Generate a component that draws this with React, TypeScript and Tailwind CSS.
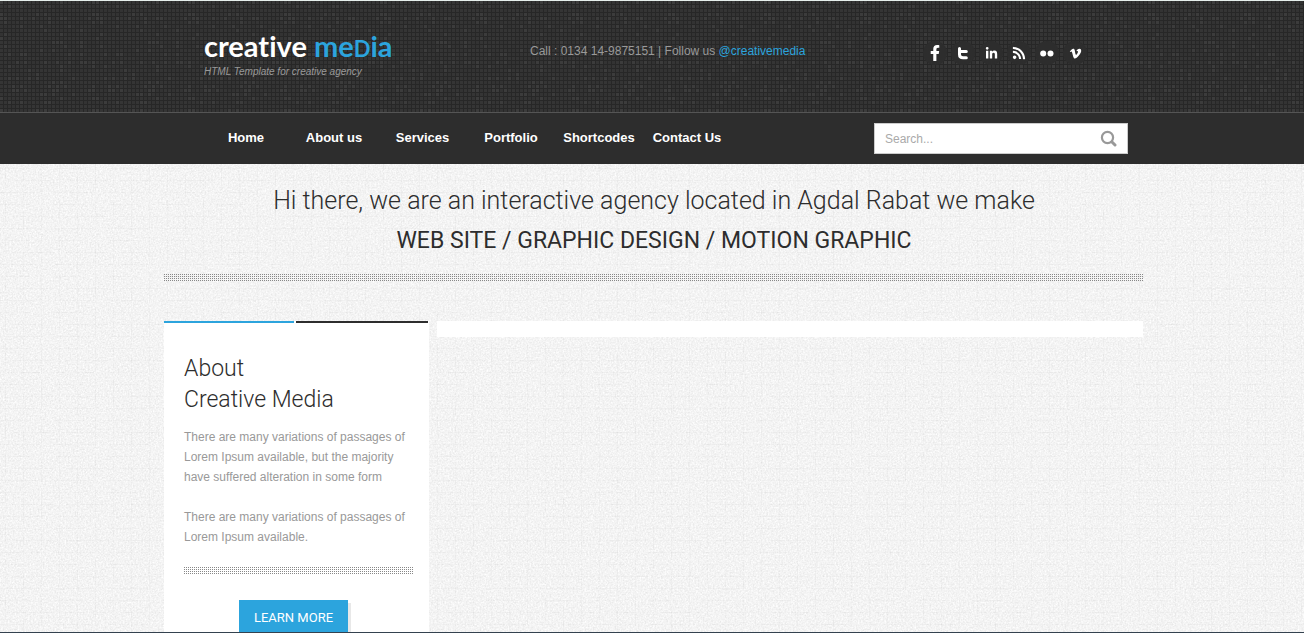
import React from 'react';
import { FaFacebookF, FaLinkedinIn, FaRss, FaVimeoV } from 'react-icons/fa';

const navItems = [
  { label: 'Home', width: 'w-[88px]' },
  { label: 'About us', width: 'w-[88px]' },
  { label: 'Services', width: 'w-[89px]' },
  { label: 'Portfolio', width: 'w-[88px]' },
  { label: 'Shortcodes', width: 'w-[88px]' },
  { label: 'Contact Us', width: 'w-[88px]' },
];

// Small deterministic hash so the header tiles keep the same shade on each render
const shade = (n: number) => {
  const v = Math.abs(Math.sin(n * 12.9898) * 43758.5453) % 1;
  return v > 0.85 ? '#3c3c3c' : v > 0.35 ? '#353535' : '#333333';
};

function HeaderTexture() {
  return (
    <svg aria-hidden="true" className="absolute inset-0 h-full w-full">
      <defs>
        <pattern id="tiles" width="96" height="96" patternUnits="userSpaceOnUse">
          <rect width="96" height="96" fill="#272727" />
          {Array.from({ length: 576 }, (_, i) => (
            <rect key={i} x={(i % 24) * 4} y={Math.floor(i / 24) * 4} width="3" height="3" fill={shade(i + 1)} />
          ))}
        </pattern>
      </defs>
      <rect width="100%" height="100%" fill="url(#tiles)" />
    </svg>
  );
}

function PaperTexture() {
  return (
    <svg aria-hidden="true" className="absolute inset-0 h-full w-full">
      <filter id="paper" x="0" y="0" width="100%" height="100%" colorInterpolationFilters="sRGB">
        <feTurbulence type="fractalNoise" baseFrequency="0.6" numOctaves="3" seed="4" />
        <feColorMatrix values="0.13 0 0 0 0.89  0.13 0 0 0 0.89  0.13 0 0 0 0.89  0 0 0 0 1" />
      </filter>
      <pattern id="weave" width="54" height="36" patternUnits="userSpaceOnUse">
        <path
          d="M0 4.5H30M12 16.5H54M0 28.5H40M5.5 0V24M23.5 10V36M41.5 0V30"
          stroke="#000"
          strokeOpacity="0.02"
        />
      </pattern>
      <rect width="100%" height="100%" filter="url(#paper)" />
      <rect width="100%" height="100%" fill="url(#weave)" />
    </svg>
  );
}

function DottedRule() {
  return (
    <div className="h-[7px] bg-[conic-gradient(from_270deg_at_1px_1px,#888_90deg,transparent_0)] bg-[length:2px_2px]" />
  );
}

function TwitterIcon() {
  return (
    <svg width="12" height="14" viewBox="0 0 12 14" fill="none" stroke="currentColor" strokeWidth="3" strokeLinecap="round">
      <path d="M2.5 2.5V8.5Q2.5 11.8 6 11.8H9.3M3 5.5H9.3" />
    </svg>
  );
}

function FlickrIcon() {
  return (
    <svg width="14" height="14" viewBox="0 0 14 14" fill="currentColor">
      <circle cx="3.2" cy="7.5" r="3" />
      <circle cx="10.5" cy="7.5" r="3" />
    </svg>
  );
}

function SocialLinks() {
  const links = [
    { label: 'Facebook', icon: <FaFacebookF size={16} /> },
    { label: 'Twitter', icon: <TwitterIcon /> },
    { label: 'LinkedIn', icon: <FaLinkedinIn size={13} /> },
    { label: 'RSS', icon: <FaRss size={14} /> },
    { label: 'Flickr', icon: <FlickrIcon /> },
    { label: 'Vimeo', icon: <FaVimeoV size={13} /> },
  ];
  return (
    <div className="flex gap-1">
      {links.map(({ label, icon }) => (
        <a
          key={label}
          href="#"
          aria-label={label}
          className="flex size-6 items-center justify-center rounded-full bg-[#2d2d2d] text-white"
        >
          {icon}
        </a>
      ))}
    </div>
  );
}

export default function App() {
  return (
    <div className="flex min-h-screen flex-col bg-[#f4f4f4] font-['Liberation_Sans',Arial,sans-serif]">
      <header>
        <div className="relative border-t border-[#e6efec]">
          <HeaderTexture />
          <div className="relative mx-auto flex h-[111px] max-w-[984px] items-start pl-11">
            <div className="w-[326px] pt-[30px]">
              <a
                href="#"
                className="block font-['Lato',sans-serif] text-[29px] leading-[30px] font-bold text-white [font-variant-ligatures:none]"
              >
                creative{' '}
                <span className="text-[#2ca4dd]">
                  me<span className="text-[22px]">D</span>ia
                </span>
              </a>
              <p className="text-[10px] leading-4 text-[#999] italic">HTML Template for creative agency</p>
            </div>
            <p className="w-[393px] pt-10 text-xs leading-5 text-[#999]">
              Call : 0134 14-9875151 | Follow us <a href="#" className="text-[#2ca4dd]">@creativemedia</a>
            </p>
            <div className="pt-10">
              <SocialLinks />
            </div>
          </div>
        </div>
        <div className="border-t border-[#555] bg-[#2d2d2d]">
          <div className="mx-auto flex h-[51px] max-w-[984px] items-center justify-between pr-4 pl-[42px]">
            <nav className="flex pb-0.5">
              {navItems.map(({ label, width }) => (
                <a key={label} href="#" className={`${width} text-center text-[13px] font-bold text-white`}>
                  {label}
                </a>
              ))}
            </nav>
            <form className="flex h-[31px] w-[254px] items-center border border-[#ccc] bg-white pr-2.5 pl-2.5">
              <input
                type="text"
                aria-label="Search"
                placeholder="Search..."
                className="min-w-0 flex-1 text-xs text-[#555] outline-none placeholder:text-[#aaa]"
              />
              <button type="button" aria-label="Submit search" className="text-[#999]">
                <svg width="17" height="17" viewBox="0 0 17 17" fill="none" stroke="currentColor">
                  <circle cx="7.5" cy="7.5" r="5.6" strokeWidth="2.2" />
                  <path d="M12 12L15 15" strokeWidth="3" strokeLinecap="round" />
                </svg>
              </button>
            </form>
          </div>
        </div>
      </header>

      <main className="relative flex flex-1 flex-col">
        <PaperTexture />
        <div className="relative mx-auto flex w-full max-w-[984px] flex-1 flex-col pl-1">
          <div className="pt-[17px] pb-[13px] text-center font-['Roboto',sans-serif] text-[#2d2d2d]">
            <h1 className="text-[25px] leading-10 font-light">
              Hi there, we are an interactive agency located in Agdal Rabat we make
            </h1>
            <h2 className="text-[23px] leading-10">WEB SITE / GRAPHIC DESIGN / MOTION GRAPHIC</h2>
          </div>
          <DottedRule />
          <div className="mt-10 flex flex-1 items-stretch gap-2">
            <aside className="w-[265px] bg-white">
              <div className="flex gap-0.5">
                <div className="h-0.5 w-[130px] bg-[#2ca4dd]" />
                <div className="h-0.5 w-[132px] bg-[#2d2d2d]" />
              </div>
              <div className="px-5 pt-[30px]">
                <h3 className="font-['Roboto',sans-serif] text-[23px] leading-[31px] font-light text-[#2d2d2d]">
                  About
                  <br />
                  Creative Media
                </h3>
                <p className="mt-3 -mr-2 text-xs leading-5 text-[#999]">
                  There are many variations of passages of Lorem Ipsum available, but the majority have suffered
                  alteration in some form
                </p>
                <p className="mt-5 mb-5 -mr-2 text-xs leading-5 text-[#999]">
                  There are many variations of passages of Lorem Ipsum available.
                </p>
                <div className="-mr-1">
                  <DottedRule />
                </div>
                <button
                  type="button"
                  className="mt-[26px] ml-[55px] block h-8 w-[109px] bg-[#2ca4dd] pt-1 font-['Roboto',sans-serif] text-[13px] text-white shadow-[3px_3px_0_#e8e8e8]"
                >
                  LEARN MORE
                </button>
              </div>
            </aside>
            <div className="h-4 w-[706px] bg-white" />
          </div>
        </div>
      </main>
      <div className="relative h-px bg-[#34424f]" />
    </div>
  );
}
